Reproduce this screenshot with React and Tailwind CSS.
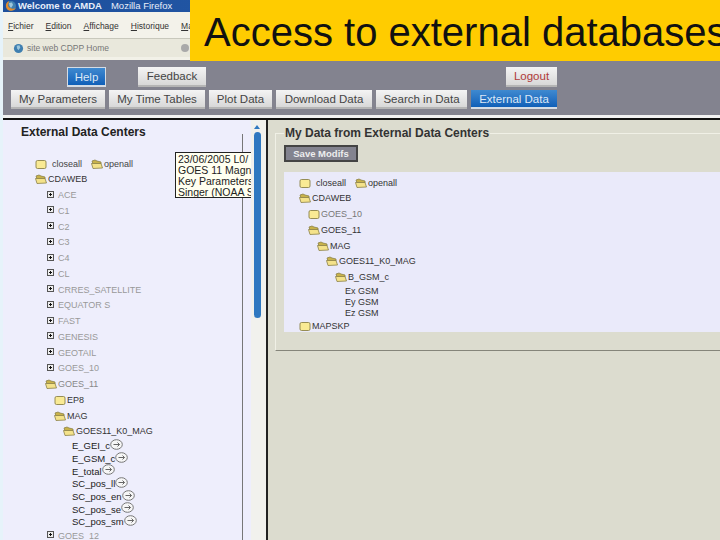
import React from 'react';

const Folder = ({ open }) => (
  <svg width="12" height="11" viewBox="0 0 12 11" className="shrink-0">
    {open ? (
      <g>
        <path d="M1 2 L4 1 L6 2 L10 3 L10 5 L2 5 Z" fill="#c8b24a" stroke="#8b8248" strokeWidth="0.8" />
        <path d="M0.5 4.5 L10 4.5 L11.5 9 L2 9.5 Z" fill="#f4e28a" stroke="#8b8248" strokeWidth="0.8" />
      </g>
    ) : (
      <rect x="1" y="1.5" width="10" height="8" rx="1.5" fill="#f9ea94" stroke="#8b8248" strokeWidth="0.9" />
    )}
  </svg>
);

const Plus = () => (
  <svg width="7" height="7" viewBox="0 0 7 7" className="shrink-0 -mt-[3px]">
    <rect x="0.5" y="0.5" width="6" height="6" fill="#eee" stroke="#555" />
    <path d="M2 3.5 H5 M3.5 2 V5" stroke="#111" />
  </svg>
);

const Arrow = () => (
  <svg width="13" height="11" viewBox="0 0 13 11" className="shrink-0 -mt-[3px]">
    <ellipse cx="6.5" cy="5.5" rx="5.8" ry="4.8" fill="#f6f6f6" stroke="#777" />
    <path d="M3.5 5.5 H9.5 M7.5 3.5 L9.5 5.5 L7.5 7.5" fill="none" stroke="#666" />
  </svg>
);

const Globe = ({ size = 12, ring }) => (
  <svg width={size} height={size} viewBox="0 0 12 12" className="shrink-0">
    <circle cx="6" cy="6" r="5" fill="#3f7fb0" />
    <path d="M4 3 L7 2.5 L8 5 L6 8 L4.5 6 Z" fill="#9cc6dc" />
    {ring && <path d="M1 7 A5.5 5.5 0 0 0 11 8 A6 6 0 0 1 3 6 L4 1 A5.5 5.5 0 0 0 1 7 Z" fill="#e08a2c" />}
  </svg>
);

const Node = ({ label, indent = 0, open, cls = 'text-[#333]' }) => (
  <div className={`flex items-center gap-px h-[15.75px] text-[9px] ${cls}`} style={{ paddingLeft: indent }}>
    <Folder open={open} />
    <span>{label}</span>
  </div>
);

const Closed = ({ label }) => (
  <div className="flex items-center gap-[4px] h-[15.75px] pl-[44px] text-[9px] text-[#999]">
    <Plus />
    <span>{label}</span>
  </div>
);

const Param = ({ label }) => (
  <div className="flex items-center h-[12.67px] pl-[69px] text-[#222]">
    <span>{label}</span>
    <Arrow />
  </div>
);

const NavButton = ({ children, active, cls = '' }) => (
  <div
    className={`flex items-center justify-center pt-[2px] text-[11.5px] border-b-2 ${cls} ${
      active
        ? 'bg-gradient-to-b from-[#3f8ad0] to-[#0f5fb8] text-[#dce8f6] border-[#d5dce5]'
        : 'bg-gradient-to-b from-[#f4f4f4] to-[#d8d8d8] text-[#444] border-[#b5b5b5]'
    }`}
  >
    {children}
  </div>
);

const closedTop = ['ACE', 'C1', 'C2', 'C3', 'C4', 'CL', 'CRRES_SATELLITE', 'EQUATOR S', 'FAST', 'GENESIS', 'GEOTAIL', 'GOES_10'];
const params = ['E_GEI_c', 'E_GSM_c', 'E_total', 'SC_pos_ll', 'SC_pos_en', 'SC_pos_se', 'SC_pos_sm'];

export default function App() {
  return (
    <div
      className="relative w-[720px] h-[540px] overflow-hidden bg-[#e6f3fa] pl-[3px] flex flex-col text-[9.5px] leading-none"
      style={{ fontFamily: '"Liberation Sans", Arial, sans-serif' }}
    >
      {/* browser chrome */}
      <div className="h-[12px] shrink-0 bg-gradient-to-r from-[#1d4f9c] to-[#2a64b4] flex items-center gap-[1px] pl-[2px] text-[9.5px] font-bold text-[#e8eefa]">
        <Globe ring />
        <span>Welcome to AMDA</span>
        <span className="ml-[8px] font-normal">Mozilla Firefox</span>
      </div>
      <div className="h-[27px] shrink-0 bg-[#f3f2ea] border-b border-[#c8c8bc] flex items-center gap-[12px] pl-[5px] pt-[2px] text-[8.5px] text-[#333]">
        <span><u>F</u>ichier</span>
        <span><u>E</u>dition</span>
        <span><u>A</u>ffichage</span>
        <span><u>H</u>istorique</span>
        <span><u>M</u>arque</span>
      </div>
      <div className="h-[18px] shrink-0 bg-[#e9e8dc] flex items-center pl-[10px] text-[8.5px] text-[#777]">
        <Globe size={11} />
        <span className="ml-[3px]">site web CDPP Home</span>
        <span className="ml-[72px] w-[8px] h-[8px] rounded-full bg-[#a9a9a9]" />
      </div>
      <div className="h-[3px] shrink-0 bg-[#f2f1e8]" />

      {/* app nav */}
      <div className="h-[55px] shrink-0 bg-[#83838f] flex flex-col justify-end gap-[3px] pl-[8px] pb-[6px]">
        <div className="flex h-[20px]">
          <NavButton active cls="ml-[56px] w-[39px] border border-[#c8d6e6]">Help</NavButton>
          <NavButton cls="ml-[32px] w-[68px]">Feedback</NavButton>
          <NavButton cls="ml-[300px] w-[51px] !text-[#b03a3a]">Logout</NavButton>
        </div>
        <div className="flex gap-[4px] h-[19px]">
          <NavButton cls="w-[94px]">My Parameters</NavButton>
          <NavButton cls="w-[96px]">My Time Tables</NavButton>
          <NavButton cls="w-[63px]">Plot Data</NavButton>
          <NavButton cls="w-[96px]">Download Data</NavButton>
          <NavButton cls="w-[91px]">Search in Data</NavButton>
          <NavButton active cls="w-[86px]">External Data</NavButton>
        </div>
      </div>
      <div className="h-[3px] shrink-0 bg-[#f2f2f2]" />
      <div className="h-[2px] shrink-0 bg-[#111]" />

      <div className="flex-1 flex min-h-0">
        {/* left tree */}
        <div className="relative w-[248px] shrink-0 bg-[#eeeefc] pt-[6px]">
          <div className="h-[8px] pl-[18px] text-[12px] font-bold text-[#222] whitespace-nowrap">External Data Centers</div>
          <div className="w-[240px] h-[406px] border-r border-[#777] pt-[22px]">
            <div className="pl-[32px] flex items-center h-[16px] text-[#444] text-[9px]">
              <Folder />
              <span className="ml-[5px]">closeall</span>
              <span className="ml-[9px]"><Folder open /></span>
              <span className="ml-px">openall</span>
            </div>
            <Node open label="CDAWEB" indent={32} />
            {closedTop.map((n) => <Closed key={n} label={n} />)}
            <Node open label="GOES_11" indent={42} cls="text-[#888]" />
            <Node label="EP8" indent={51} />
            <Node open label="MAG" indent={51} />
            <Node open label="GOES11_K0_MAG" indent={60} />
            {params.map((n) => <Param key={n} label={n} />)}
            <Closed label="GOES_12" />
          </div>

          {/* tooltip over the tree */}
          <div className="absolute left-[172px] top-[32px] w-[76px] h-[46px] overflow-hidden bg-[#fffff0] border border-r-0 border-[#222] px-[2px] py-[1px] text-[10.5px] leading-[11px] text-[#222] whitespace-nowrap z-10">
            23/06/2005 L0/<br />GOES 11 Magne<br />Key Parameters<br />Singer (NOAA SE
          </div>
        </div>

        {/* scrollbar */}
        <div className="w-[15px] shrink-0 bg-[#f1f1ed] flex">
          <div className="w-[12px] flex flex-col items-center pt-[5px]">
            <div className="w-0 h-0 border-x-[3px] border-x-transparent border-b-[4px] border-b-[#2f78c0]" />
            <div className="mt-[3px] w-[7px] h-[186px] rounded bg-[#2f78c0]" />
          </div>
        </div>
        <div className="w-[2px] shrink-0 bg-[#222]" />

        {/* right panel */}
        <div className="flex-1 bg-[#dcdccf] pl-[7px] pt-[13px]">
          <div className="relative h-[218px] border-l border-t border-l-[#f0f0e6] border-t-[#f0f0e6] border-b border-b-[#85857a] pt-[11px] pl-[8px]">
            <div className="absolute -top-[7px] left-[8px] bg-[#dcdccf] px-px text-[12px] font-bold text-[#333] whitespace-nowrap">My Data from External Data Centers</div>
            <div className="w-[74px] h-[17px] bg-[#83838f] border-2 border-[#444] flex items-center justify-center text-[9.5px] font-bold text-[#eee]">Save Modifs</div>
            <div className="mt-[10px] h-[160px] bg-[#eaeafa] pt-[3px] text-[#333] text-[9px]">
              <div className="pl-[15px] flex items-center h-[16px]">
                <Folder />
                <span className="ml-[5px]">closeall</span>
                <span className="ml-[9px]"><Folder open /></span>
                <span className="ml-px">openall</span>
              </div>
              <Node open label="CDAWEB" indent={15} />
              <Node label="GOES_10" indent={24} cls="text-[#777]" />
              <Node open label="GOES_11" indent={24} />
              <Node open label="MAG" indent={33} />
              <Node open label="GOES11_K0_MAG" indent={42} />
              <Node open label="B_GSM_c" indent={51} />
              <div className="pl-[61px] h-[11px] flex items-center">Ex GSM</div>
              <div className="pl-[61px] h-[11px] flex items-center">Ey GSM</div>
              <div className="pl-[61px] h-[11px] flex items-center">Ez GSM</div>
              <Node label="MAPSKP" indent={15} />
            </div>
          </div>
        </div>
      </div>

      {/* slide title */}
      <div className="absolute left-[190px] top-0 w-[530px] h-[61px] bg-[#ffcc00] pl-[14px] pt-[10px] text-[40px] leading-[44px] text-[#111] whitespace-nowrap overflow-hidden z-30">
        Access to external databases
      </div>
    </div>
  );
}
